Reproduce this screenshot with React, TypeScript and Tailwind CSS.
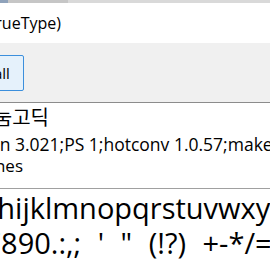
export default function App() {
  return (
    <div
      className="w-[270px] h-[270px] overflow-hidden bg-white text-black flex flex-col"
      style={{ fontFamily: '"Open Sans", "Noto Sans CJK KR", sans-serif' }}
    >
      <div className="h-[3px] flex shrink-0">
        <div className="w-[8px] bg-[#8fa2ba]" />
        <div className="w-[60px] bg-[#c6c6c6]" />
        <div className="flex-1 bg-[#d9d9d9]" />
      </div>

      {/* title, cut at the left edge of the window */}
      <div className="h-[40px] shrink-0 bg-white flex items-center">
        <div className="w-[61px] flex justify-end whitespace-nowrap text-[16px] leading-none">나눔고딕 (TrueType)</div>
      </div>

      <div className="h-[59px] shrink-0 bg-[#f0f0f0] pt-[12px]">
        <div className="ml-[-46px] w-[70px] h-[36px] border border-[#3c8fdc] rounded-[2px] bg-[#e5f1fb] flex items-center justify-center text-[15px]">
          Install
        </div>
      </div>

      <div className="h-px shrink-0 bg-[#8c8c8c]" />

      <div className="flex flex-col whitespace-nowrap">
        <div className="h-[30px] flex items-center">
          <div className="w-[49px] flex justify-end text-[20px] leading-none">나눔고딕</div>
        </div>
        <div className="h-[22px] flex items-center ml-[-51px] text-[17.5px]">Version 3.021;PS 1;hotconv 1.0.57;makeotf.lib2.0.21325</div>
        <div className="h-[22px] flex items-center">
          <div className="w-[23px] flex justify-end text-[17px]">OpenType Layout, TrueType Outlines</div>
        </div>
        <div className="h-[11px]" />
        <div className="h-px bg-[#a0a0a0]" />
        <div className="h-[36px] flex items-center ml-[-110px] text-[29px] leading-none">abcdefghijklmnopqrstuvwxyz ABCDEFGHIJKLMNOPQRSTUVWXYZ</div>
        <div className="h-[34px] flex items-center ml-[-115px] text-[29px] leading-none [word-spacing:9px]">1234567890.:,; ' " (!?) +-*/=</div>
      </div>
    </div>
  );
}
